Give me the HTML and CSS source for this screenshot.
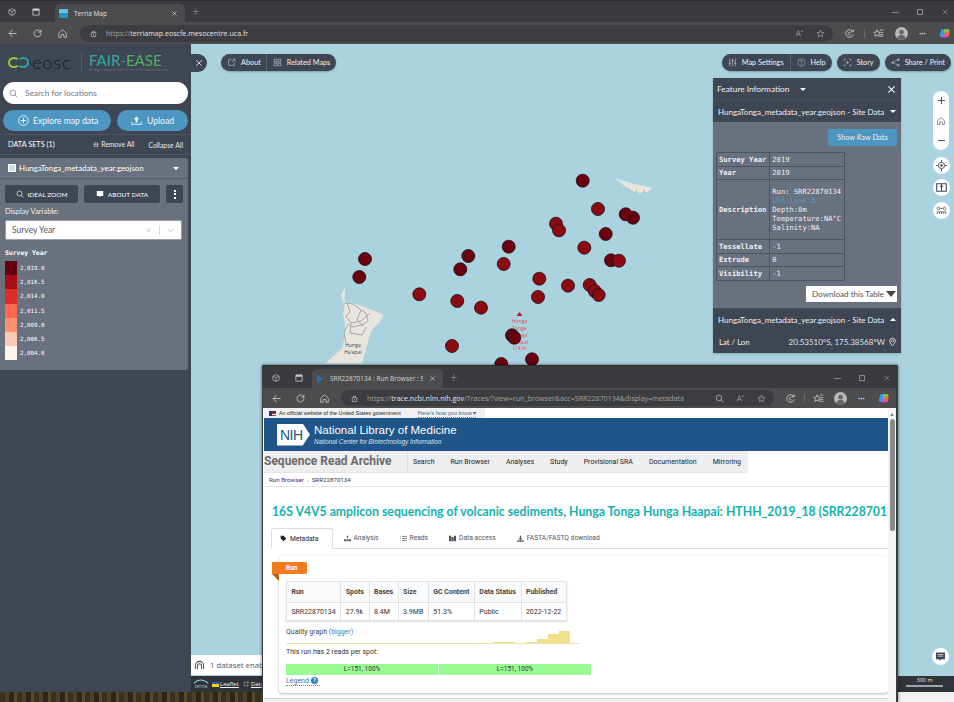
FILE: index.html
```html
<!DOCTYPE html>
<html lang="en">
<head>
<meta charset="utf-8">
<title>Terria Map</title>
<link rel="stylesheet" href="styles.css">
</head>
<body>
<svg class="sprite" aria-hidden="true">
  <symbol id="i-back" viewBox="0 0 16 16"><path d="M14 8H3M8 3 3 8l5 5" fill="none" stroke="currentColor" stroke-width="1.2"/></symbol>
  <symbol id="i-reload" viewBox="0 0 16 16"><path d="M13 8a5 5 0 1 1-1.6-3.7L13 6V2.5M13 6H9.5" fill="none" stroke="currentColor" stroke-width="1.2"/></symbol>
  <symbol id="i-home" viewBox="0 0 16 16"><path d="M2.5 7.5 8 2.5l5.500 5v6H10V9.500H6v4H2.500z" fill="none" stroke="currentColor" stroke-width="1.100"/></symbol>
  <symbol id="i-lock" viewBox="0 0 16 16"><path d="M4 6.500h8v7H4zM6 6.500V4h4v2.500" fill="none" stroke="currentColor" stroke-width="1.200"/><circle cx="8" cy="10" r="1" fill="currentColor"/></symbol>
  <symbol id="i-tabs" viewBox="0 0 16 16"><path d="M3 5l5-2.500 5 2.500v6l-5 2.500-5-2.500z M8 7.500v6M3 5l5 2.500 5-2.500" fill="none" stroke="currentColor" stroke-width="1"/></symbol>
  <symbol id="i-win" viewBox="0 0 16 16"><path d="M3 3h10v10H3z" fill="none" stroke="currentColor" stroke-width="1.300"/><path d="M3 3h10v3H3z" fill="currentColor"/></symbol>
  <symbol id="i-close" viewBox="0 0 16 16"><path d="M3.500 3.500l9 9m0-9l-9 9" fill="none" stroke="currentColor" stroke-width="1.500"/></symbol>
  <symbol id="i-star" viewBox="0 0 16 16"><path d="M8 2.200l1.800 3.900 4.200.5-3.100 2.900.8 4.200L8 11.600l-3.700 2.100.8-4.200L2 6.600l4.200-.5z" fill="none" stroke="currentColor" stroke-width="1"/></symbol>
  <symbol id="i-read" viewBox="0 0 16 16"><path d="M2 13 6 3l4 10M3.500 10h5M11 5l1.500-2L14 5" fill="none" stroke="currentColor" stroke-width="1"/></symbol>
  <symbol id="i-ext" viewBox="0 0 16 16"><path d="M8 3H3v10h10V8M9 7l5-5M10 2h4v4" fill="none" stroke="currentColor" stroke-width="1.200"/></symbol>
  <symbol id="i-grid" viewBox="0 0 16 16"><path d="M2 2h5v5H2zM9 2h5v5H9zM2 9h5v5H2zM9 9h5v5H9z" fill="none" stroke="currentColor" stroke-width="1.200"/></symbol>
  <symbol id="i-sliders" viewBox="0 0 16 16"><path d="M3 1v14M8 1v14M13 1v14" stroke="currentColor" stroke-width="1.200"/><path d="M1.500 9h3v2h-3zM6.500 4h3v2h-3zM11.500 8h3v2h-3z" fill="currentColor"/></symbol>
  <symbol id="i-help" viewBox="0 0 16 16"><circle cx="8" cy="8" r="6.500" fill="none" stroke="currentColor"/><path d="M6 6.500a2 2 0 1 1 3 1.700c-.7.4-1 .8-1 1.500" fill="none" stroke="currentColor"/><circle cx="8" cy="11.800" r=".7" fill="currentColor"/></symbol>
  <symbol id="i-story" viewBox="0 0 16 16"><path d="M2 5V2h3M11 2h3v3M14 11v3h-3M5 14H2v-3M8 5v6M5 8h6" fill="none" stroke="currentColor" stroke-width="1.200"/></symbol>
  <symbol id="i-share" viewBox="0 0 16 16"><circle cx="3" cy="8" r="2" fill="currentColor"/><circle cx="13" cy="3" r="2" fill="currentColor"/><circle cx="13" cy="13" r="2" fill="currentColor"/><path d="M3 8l10-5M3 8l10 5" stroke="currentColor"/></symbol>
  <symbol id="i-search" viewBox="0 0 16 16"><circle cx="7" cy="7" r="5" fill="none" stroke="currentColor" stroke-width="1.300"/><path d="M10.500 10.500 15 15" stroke="currentColor" stroke-width="1.300"/></symbol>
  <symbol id="i-plus-c" viewBox="0 0 16 16"><circle cx="8" cy="8" r="7" fill="none" stroke="currentColor" stroke-width="1.300"/><path d="M8 4v8M4 8h8" stroke="currentColor" stroke-width="1.500"/></symbol>
  <symbol id="i-upload" viewBox="0 0 16 16"><path d="M1 10v3.500h14V10" fill="none" stroke="currentColor" stroke-width="1.300"/><path d="M8 2l4 4H9.500v5h-3V6H4z" fill="currentColor"/></symbol>
  <symbol id="i-chat" viewBox="0 0 16 16"><path d="M1.500 2h13v10H9l-2.500 2.500V12h-5z" fill="currentColor"/><path d="M4 5h8M4 7.500h8" stroke="#fff" stroke-width="1"/></symbol>
  <symbol id="i-target" viewBox="0 0 16 16"><circle cx="8" cy="8" r="4.500" fill="none" stroke="currentColor" stroke-width="1.300"/><circle cx="8" cy="8" r="1.800" fill="currentColor"/><path d="M8 0v3M8 13v3M0 8h3M13 8h3" stroke="currentColor" stroke-width="1.300"/></symbol>
  <symbol id="i-split" viewBox="0 0 16 16"><path d="M1 2.500h14v11H1z" fill="none" stroke="currentColor" stroke-width="1.500"/><path d="M8 3v10" stroke="currentColor" stroke-width="1.500"/><path d="M8 4l3 3H5z" fill="currentColor"/></symbol>
  <symbol id="i-network" viewBox="0 0 16 16"><circle cx="3.500" cy="5" r="2" fill="none" stroke="currentColor"/><circle cx="12.500" cy="5" r="2" fill="none" stroke="currentColor"/><path d="M5.500 5h5M1 10h14M2 13v-3M5 13v-3M8 13v-3M11 13v-3M14 13v-3" stroke="currentColor"/></symbol>
  <symbol id="i-pin" viewBox="0 0 16 16"><path d="M8 15C4.500 10.500 3 8.500 3 6a5 5 0 0 1 10 0c0 2.500-1.500 4.500-5 9z" fill="none" stroke="currentColor" stroke-width="1.300"/><circle cx="8" cy="6" r="2" fill="none" stroke="currentColor"/></symbol>
  <symbol id="i-ear" viewBox="0 0 16 16"><path d="M2 13v-5a6 6 0 0 1 12 0v5M5 13V8.500a3 3 0 0 1 6 0V13" fill="none" stroke="currentColor" stroke-width="1.500"/></symbol>
  <symbol id="i-sync" viewBox="0 0 16 16"><path d="M13 5.500A5.500 5.500 0 1 0 13.500 9M9.500 6.500a2 2 0 1 0 0 3M13.500 2v3.500H10" fill="none" stroke="currentColor" stroke-width="1.200"/></symbol>
  <symbol id="i-favs" viewBox="0 0 16 16"><path d="M6 2.500 7.400 6l3.600.3-2.700 2.300.8 3.600L6 10.300l-3.100 1.900.8-3.600L1 6.300 4.600 6zM10 3h5M12 6.500h3M10 12h5M10 9.500h5" fill="none" stroke="currentColor" stroke-width="1.100"/></symbol>
  <symbol id="i-copilot" viewBox="0 0 16 16"><path d="M3 3h6L6 13H2.500A1.500 1.500 0 0 1 1 11z" fill="#2a9df4"/><path d="M7 3h5a2 2 0 0 1 2 2l-2 6H7z" fill="#7fd13b"/><path d="M9 6h5.500L13 13H6z" fill="#f1683b"/><path d="M5 10h7l-2 4H4z" fill="#d94fc4"/></symbol>
  <symbol id="i-avatar" viewBox="0 0 16 16"><circle cx="8" cy="8" r="8" fill="#b9b9b9"/><circle cx="8" cy="6.300" r="3" fill="#666"/><path d="M2.800 13.500c1-3 2.800-4 5.200-4s4.200 1 5.200 4A8 8 0 0 1 8 16a8 8 0 0 1-5.200-2.500z" fill="#666"/></symbol>
</svg>

<div class="desktop">
  <div class="window-main">
    <div class="tabstrip">
      <svg class="chrome-icon tab-first"><use href="#i-tabs"/></svg>
      <svg class="chrome-icon"><use href="#i-win"/></svg>
      <div class="tab">
        <span class="favicon"></span>
        <span class="tab-title">Terria Map</span>
        <svg class="tab-close"><use href="#i-close"/></svg>
      </div>
      <span class="new-tab">+</span>
      <div class="win-controls">
        <span class="wc-min"></span><span class="wc-max"></span><svg class="wc-close"><use href="#i-close"/></svg>
      </div>
    </div>
    <div class="toolbar">
      <svg class="nav-icon"><use href="#i-back"/></svg>
      <svg class="nav-icon"><use href="#i-reload"/></svg>
      <svg class="nav-icon"><use href="#i-home"/></svg>
      <div class="address">
        <svg class="addr-icon"><use href="#i-lock"/></svg>
        <span class="url"><span class="dim">https://</span>terriamap.eoscfe.mesocentre.uca.fr</span>
        <svg class="addr-icon push"><use href="#i-read"/></svg>
        <svg class="addr-icon addr-star"><use href="#i-star"/></svg>
      </div>
      <svg class="nav-icon"><use href="#i-sync"/></svg>
      <span class="sep"></span>
      <svg class="nav-icon"><use href="#i-favs"/></svg>
      <svg class="avatar"><use href="#i-avatar"/></svg>
      <span class="dots">···</span>
      <svg class="copilot"><use href="#i-copilot"/></svg>
    </div>

    <div class="app">
      <aside class="sidebar">
        <div class="brand">
          <span class="eosc"><span class="eosc-mark"><i class="ring-a"></i><i class="ring-b"></i></span>eosc</span>
          <span class="brand-rule"></span>
          <span class="fair"><span class="fair-name"><b class="teal">FAIR</b><b class="mint">-</b><b class="green">EASE</b></span><small>Building an Innovative Earth Science &amp; Environmental Services</small></span>
        </div>
        <div class="search"><svg class="search-icon"><use href="#i-search"/></svg><span>Search for locations</span></div>
        <div class="actions">
          <div class="act act-wide"><svg><use href="#i-plus-c"/></svg>Explore map data</div>
          <div class="act act-narrow"><svg><use href="#i-upload"/></svg>Upload</div>
        </div>
        <div class="sets">
          <span class="sets-title">DATA SETS (1)</span>
          <span class="sets-link sets-remove">⊖ Remove All</span>
          <span class="sets-link">Collapse All</span>
        </div>
        <div class="card">
          <div class="card-head"><span class="check"></span><span class="card-name">HungaTonga_metadata_year.geojson</span><span class="caret"></span></div>
          <div class="card-btns">
            <div class="cbtn cbtn-a"><svg><use href="#i-search"/></svg>IDEAL ZOOM</div>
            <div class="cbtn cbtn-b"><svg><use href="#i-chat"/></svg>ABOUT DATA</div>
            <div class="cbtn cbtn-c"><i></i><i></i><i></i></div>
          </div>
          <div class="var-label">Display Variable:</div>
          <div class="select"><span class="select-text">Survey Year</span><svg class="select-x"><use href="#i-close"/></svg><span class="select-sep"></span><svg class="select-arrow" viewBox="0 0 10 6"><path d="M1 1l4 4 4-4" fill="none" stroke="currentColor"/></svg></div>
          <div class="legend-title">Survey Year</div>
          <div class="legend">
            <div class="lg-row"><span class="sw sw1"></span>2,019.0</div>
            <div class="lg-row"><span class="sw sw2"></span>2,016.5</div>
            <div class="lg-row"><span class="sw sw3"></span>2,014.0</div>
            <div class="lg-row"><span class="sw sw4"></span>2,011.5</div>
            <div class="lg-row"><span class="sw sw5"></span>2,009.0</div>
            <div class="lg-row"><span class="sw sw6"></span>2,006.5</div>
            <div class="lg-row"><span class="sw sw7"></span>2,004.0</div>
          </div>
        </div>
      </aside>

      <main class="map">
        <svg class="map-canvas" viewBox="191 44 763 648" aria-hidden="true">
          <path class="land" d="M345 287.300l-4 7.700 2.300 6.700 10 1.600 15 5 15 6.700-3.300 6.700-8.300 8.300-5 16.700-5 16.700h-36.700l16.700-14.700 3.300-11.600v-13.400l-2-10.300 1.500-6z"/>
          <path class="land" d="M615 178l15 5 10 2 12 3-4 4-11 1-10-5z"/>
          <path class="road" d="M347 303l3 8-4 6 5 6 10-2 9-8M353 304l8 6 5 3 2 8-6 4-9 2-5-3-4 9 2 10M361 310l-4 10 6 6M351 323l-1 10 12 2 4-8M345 303l8 1"/>
          <path class="road" d="M628 188l2 3M636 190l1 3M644 190l0 3"/>
          <text class="islabel" x="353" y="347">Hunga</text>
          <text class="islabel" x="353" y="354">Ha'apai</text>
          <path class="peak" d="M519.500 312l3 4h-6z"/>
          <text class="volcano" x="519.500" y="323">Hunga</text>
          <text class="volcano" x="519.500" y="330">Tonga</text>
          <text class="volcano" x="519.500" y="337">Hunga</text>
          <text class="volcano" x="519.500" y="344">Ha'apai</text>
          <text class="volcano" x="519.500" y="350">114 m</text>
          <g class="dot-old">
            <circle cx="582.700" cy="180.700" r="6.500"/><circle cx="633" cy="217.700" r="6.500"/><circle cx="625.700" cy="214.300" r="6.500"/>
            <circle cx="605.700" cy="234" r="6.500"/><circle cx="508.700" cy="246.700" r="6.500"/><circle cx="611" cy="260.300" r="6.500"/>
            <circle cx="468.300" cy="256" r="6.500"/><circle cx="365" cy="259" r="6.500"/><circle cx="359.300" cy="277" r="6.500"/>
            <circle cx="460.300" cy="269.300" r="6.500"/>
          </g>
          <g class="dot-new">
            <circle cx="598" cy="209" r="6.500"/><circle cx="556" cy="223.700" r="6.500"/><circle cx="559" cy="230.300" r="6.500"/>
            <circle cx="584.300" cy="247.700" r="6.500"/><circle cx="619" cy="260.700" r="6.500"/><circle cx="503.700" cy="264" r="6.500"/>
            <circle cx="539.300" cy="278.700" r="6.500"/><circle cx="568" cy="285.700" r="6.500"/><circle cx="589.700" cy="285" r="6.500"/>
            <circle cx="594.700" cy="291" r="6.500"/><circle cx="598.700" cy="295" r="6.500"/><circle cx="538" cy="297" r="6.500"/>
            <circle cx="419.300" cy="294.300" r="6.500"/><circle cx="457.300" cy="301" r="6.500"/><circle cx="481" cy="307.700" r="6.500"/>
            <circle cx="452" cy="346" r="6.500"/>
          </g>
          <g class="dot-old">
            <circle cx="512" cy="335.300" r="6.500"/><circle cx="514.300" cy="337.700" r="6.500"/><circle cx="532" cy="359.300" r="6.500"/><circle cx="501.300" cy="364" r="6.500"/>
          </g>
        </svg>

        <button class="panel-close"><svg><use href="#i-close"/></svg></button>

        <div class="topbar-left">
          <div class="pill">
            <span class="pill-item pill-about"><svg><use href="#i-ext"/></svg>About</span>
            <span class="pill-item pill-related"><svg><use href="#i-grid"/></svg>Related Maps</span>
          </div>
        </div>
        <div class="topbar-right">
          <div class="pill">
            <span class="pill-item pill-settings"><svg><use href="#i-sliders"/></svg>Map Settings</span>
            <span class="pill-item pill-help"><svg><use href="#i-help"/></svg>Help</span>
          </div>
          <div class="pill"><span class="pill-item pill-story"><svg><use href="#i-story"/></svg>Story</span></div>
          <div class="pill"><span class="pill-item pill-share"><svg><use href="#i-share"/></svg>Share / Print</span></div>
        </div>

        <section class="feature">
          <header class="f-head"><span>Feature Information</span><span class="caret f-caret"></span><svg class="f-close"><use href="#i-close"/></svg></header>
          <div class="f-sub"><span>HungaTonga_metadata_year.geojson - Site Data</span><span class="caret"></span></div>
          <div class="f-body">
            <div class="raw-row"><span class="raw">Show Raw Data</span></div>
            <table class="f-table">
              <tr><th>Survey Year</th><td>2019</td></tr>
              <tr><th>Year</th><td>2019</td></tr>
              <tr><th>Description</th><td class="f-desc">Run: SRR22870134<br><span class="f-link">SRA link ⧉</span><br>Depth:0m<br>Temperature:NA°C<br>Salinity:NA</td></tr>
              <tr><th>Tessellate</th><td>-1</td></tr>
              <tr><th>Extrude</th><td>0</td></tr>
              <tr><th>Visibility</th><td>-1</td></tr>
            </table>
            <div class="dl-row"><span class="dl"><span>Download this Table</span><i class="dl-arrow"></i></span></div>
          </div>
          <div class="f-foot"><span>HungaTonga_metadata_year.geojson - Site Data</span><span class="caret caret-up"></span></div>
          <div class="f-loc"><span>Lat / Lon</span><span class="f-coords">20.53510°S, 175.38568°W<svg><use href="#i-pin"/></svg></span></div>
        </section>

        <div class="map-ctrl">
          <div class="zoom-pill">
            <svg viewBox="0 0 10 10"><path d="M1 5h8M5 1v8" stroke="currentColor" stroke-width="1.200"/></svg>
            <svg class="zoom-home"><use href="#i-home"/></svg>
            <svg viewBox="0 0 10 10"><path d="M1 5h8" stroke="currentColor" stroke-width="1.200"/></svg>
          </div>
          <span class="round"><svg><use href="#i-target"/></svg></span>
          <span class="round"><svg><use href="#i-split"/></svg></span>
          <span class="round"><svg><use href="#i-network"/></svg></span>
        </div>
        <span class="round feedback"><svg><use href="#i-chat"/></svg></span>

        <div class="notice"><svg><use href="#i-ear"/></svg><span>1 dataset enabled</span></div>
        <footer class="map-foot">
          <span class="terria"><svg viewBox="0 0 20 6"><path d="M1 5c5-5 12-5 18 0" fill="none" stroke="currentColor" stroke-width="1.500"/></svg>terria</span>
          <span class="flag"><i></i><i></i></span>
          <span class="foot-link">Leaflet</span>
          <svg class="foot-ext"><use href="#i-ext"/></svg>
          <span class="foot-link">Data</span>
          <span class="scale"><span>300 m</span><i></i></span>
        </footer>
      </main>
    </div>
  </div>
  <div class="wallpaper"></div>

  <div class="window-float">
    <div class="tabstrip tabstrip-b">
      <svg class="chrome-icon tab-first"><use href="#i-tabs"/></svg>
      <svg class="chrome-icon"><use href="#i-win"/></svg>
      <div class="tab tab-b">
        <svg class="ncbi-fav" viewBox="0 0 10 10"><path d="M1 1h3l4 4-4 4H1z" fill="#2c6ea8"/></svg>
        <span class="tab-title">SRR22870134 : Run Browser : SRA</span>
        <svg class="tab-close"><use href="#i-close"/></svg>
      </div>
      <span class="new-tab">+</span>
      <div class="win-controls">
        <span class="wc-min"></span><span class="wc-max"></span><svg class="wc-close"><use href="#i-close"/></svg>
      </div>
    </div>
    <div class="toolbar toolbar-b">
      <svg class="nav-icon"><use href="#i-back"/></svg>
      <svg class="nav-icon"><use href="#i-reload"/></svg>
      <svg class="nav-icon"><use href="#i-home"/></svg>
      <div class="address">
        <svg class="addr-icon"><use href="#i-lock"/></svg>
        <span class="url"><span class="dim">https://</span>trace.ncbi.nlm.nih.gov<span class="dim">/Traces/?view=run_browser&amp;acc=SRR22870134&amp;display=metadata</span></span>
        <svg class="addr-icon push"><use href="#i-search"/></svg>
        <svg class="addr-icon addr-gap"><use href="#i-read"/></svg>
        <svg class="addr-icon addr-star"><use href="#i-star"/></svg>
      </div>
      <svg class="nav-icon"><use href="#i-sync"/></svg>
      <span class="sep"></span>
      <svg class="nav-icon"><use href="#i-favs"/></svg>
      <svg class="avatar"><use href="#i-avatar"/></svg>
      <span class="dots">···</span>
      <svg class="copilot"><use href="#i-copilot"/></svg>
    </div>
    <div class="page">
      <div class="page-main">
        <div class="gov"><span class="gov-inner"><span class="us-flag"></span>An official website of the United States government<span class="gov-how">Here's how you know ▾</span></span></div>
        <div class="nih">
          <span class="nih-logo">NIH</span>
          <div class="nih-text"><div class="nih-name">National Library of Medicine</div><div class="nih-sub">National Center for Biotechnology Information</div></div>
        </div>
        <nav class="sra-nav">
          <span class="sra-name">Sequence Read Archive</span>
          <span class="sra-links"><a>Search</a><a>Run Browser</a><a>Analyses</a><a>Study</a><a>Provisional SRA</a><a>Documentation</a><a>Mirroring</a></span>
        </nav>
        <div class="crumbs"><a>Run Browser</a><span class="crumb-sep">›</span><span>SRR22870134</span></div>
        <h1 class="sra-title">16S V4V5 amplicon sequencing of volcanic sediments, Hunga Tonga Hunga Haapai: HTHH_2019_18 (SRR22870134)</h1>
        <div class="sra-tabs">
          <span class="stab stab-on"><svg viewBox="0 0 10 10"><path d="M1 1h4l4 4-4 4-4-4z" fill="currentColor"/></svg>Metadata</span>
          <span class="stab"><svg viewBox="0 0 10 10"><path d="M4 1h2v3H4zM0 6h3v3H0zM3.500 6h3v3h-3zM7 6h3v3H7z" fill="currentColor"/></svg>Analysis</span>
          <span class="stab"><svg viewBox="0 0 10 10"><path d="M3 2h7M3 5h7M3 8h7M0 2h1M0 5h1M0 8h1" stroke="currentColor"/></svg>Reads</span>
          <span class="stab"><svg viewBox="0 0 10 10"><path d="M0 1h3v8H0zM3.500 3h3v6h-3zM7 1h3v8H7z" fill="currentColor"/></svg>Data access</span>
          <span class="stab"><svg viewBox="0 0 10 10"><path d="M4 1h2v4h2L5 8 2 5h2zM0 8h10v1.500H0z" fill="currentColor"/></svg>FASTA/FASTQ download</span>
        </div>
        <div class="sra-panel">
          <div class="ribbon">Run</div>
          <table class="run-table">
            <tr><th>Run</th><th>Spots</th><th>Bases</th><th>Size</th><th>GC Content</th><th>Data Status</th><th>Published</th></tr>
            <tr><td>SRR22870134</td><td>27.9k</td><td>8.4M</td><td>3.9MB</td><td>51.3%</td><td>Public</td><td>2022-12-22</td></tr>
          </table>
          <div class="quality">
            <span>Quality graph <a>(bigger)</a></span>
            <span class="q-bars"><i class="q1"></i><i class="q2"></i><i class="q3"></i><i class="q4"></i><i class="q5"></i></span>
          </div>
          <div class="reads-note">This run has 2 reads per spot:</div>
          <div class="reads"><span>L=151, 100%</span><span>L=151, 100%</span></div>
          <div class="legend-link"><a>Legend</a><b>?</b></div>
        </div>
        <div class="hscroll"></div>
      </div>
      <div class="vscroll"><i class="v-arrow"></i><i class="v-thumb"></i></div>
    </div>
  </div>
</div>
</body>
</html>
```
FILE: styles.css
```css
* { box-sizing: border-box; }
html, body { margin: 0; padding: 0; height: 100%; overflow: hidden; }
body { font-family: "Lato", "Noto Sans", sans-serif; background: #aad3df; }
.sprite { position: absolute; width: 0; height: 0; }
svg { display: block; }

.desktop { position: relative; width: 954px; height: 702px; overflow: hidden; display: flex; flex-direction: column; }
.window-main { height: 692px; display: flex; flex-direction: column; flex: none; }
.wallpaper { flex: 1; background: linear-gradient(90deg, transparent 262px, #f2f2f2 262px), repeating-linear-gradient(90deg, #3a3020 0 5px, #4e4026 5px 9px, #2e2719 9px 14px, #5a4a2c 14px 17px); }

/* browser chrome */
.tabstrip { height: 22px; flex: none; display: flex; align-items: flex-end; background: #3a3b3e; border-top: 1px solid #2b2b2e; color: #d8d8d8; padding-left: 7px; }
.chrome-icon { width: 10px; height: 10px; margin: 0 6px 5px 0; color: #c8c8c8; flex: none; }
.tab-first { margin-right: 14px; }
.tab { width: 130px; height: 18px; margin-left: 8px; background: #4b4c4e; border-radius: 5px 5px 0 0; display: flex; align-items: center; padding: 0 7px 0 4px; gap: 6px; flex: none; }
.favicon { width: 9px; height: 9px; background: linear-gradient(180deg, #5ec5e8 45%, #2d8fbf 45%); border-radius: 1px; flex: none; }
.tab-title { font: 6.500px "Open Sans", sans-serif; color: #e0e0e0; white-space: nowrap; overflow: hidden; flex: 1; }
.tab-close { width: 7px; height: 7px; color: #ddd; flex: none; }
.new-tab { font: 300 13px "Open Sans", sans-serif; color: #9a9a9a; margin: 0 0 2px 7px; line-height: 18px; }
.win-controls { margin-left: auto; display: flex; align-items: center; gap: 18px; padding: 0 5px 6px 0; }
.wc-min { width: 7px; height: 1px; background: #888; }
.wc-max { width: 6px; height: 6px; border: 1px solid #888; }
.wc-close { width: 8px; height: 8px; color: #888; }

.toolbar { height: 22px; flex: none; display: flex; align-items: center; background: #4b4c4e; padding-left: 7px; color: #cfcfcf; }
.nav-icon { width: 11px; height: 11px; margin-right: 14px; flex: none; color: #d0d0d0; }
.address { width: 753px; margin-left: -2px; margin-right: 11px; height: 17px; border-radius: 9px; background: #3c3d40; display: flex; align-items: center; padding: 0 8px 0 9px; flex: none; }
.addr-icon { width: 9px; height: 9px; color: #c0c0c0; flex: none; }
.addr-icon.push { margin-left: auto; }
.addr-gap { margin-left: 12px; }
.addr-star { margin-left: 12px; }
.url { font: 7.100px "Open Sans", sans-serif; color: #e4e4e4; margin-left: 8px; white-space: nowrap; }
.dim { color: #a2a2a2; }
.sep { width: 1px; height: 9px; background: #6a6a6c; margin: 0 8px 0 -5px; flex: none; }
.avatar { width: 13px; height: 13px; margin: 0 11px 0 -3px; flex: none; }
.dots { font: bold 8px "Open Sans", sans-serif; color: #ddd; width: 12px; margin-right: 8px; flex: none; white-space: nowrap; }
.copilot { width: 12px; height: 12px; flex: none; }

/* app */
.app { flex: 1; display: flex; min-height: 0; }
.sidebar { width: 191px; flex: none; background: #3e4553; color: #fff; display: flex; flex-direction: column; }

.brand { height: 34px; padding: 2px 0 0 8px; display: flex; align-items: center; flex: none; }
.eosc { display: flex; align-items: center; font: 300 18.500px/18px "Lato", sans-serif; color: #16181c; letter-spacing: .7px; width: 73px; }
.eosc-mark { position: relative; width: 21px; height: 11px; margin-right: 3px; flex: none; }
.eosc-mark i { position: absolute; top: 0; width: 12px; height: 11px; border: 2px solid #9acb2e; border-radius: 50%; }
.ring-a { left: 0; border-right-color: transparent !important; }
.ring-b { left: 9px; border-color: #2aa7a0 !important; border-left-color: transparent !important; }
.brand-rule { width: 1px; height: 20px; background: #4f5665; margin-right: 7px; flex: none; }
.fair { display: flex; flex-direction: column; }
.fair-name { font: 400 15px/15px "Lato", sans-serif; white-space: nowrap; }
.fair-name b { font-weight: 400; }
.teal { color: #2fa9a5; }
.mint { color: #4e8f8e; }
.green { color: #52ae60; }
.fair small { font: 2.900px/4px "Lato", sans-serif; color: #6e7584; white-space: nowrap; }

.search { height: 22px; margin: 4px 3px 0; border-radius: 11px; background: #fff; display: flex; align-items: center; color: #6d7480; font: 400 8.300px "Lato", sans-serif; padding-left: 6px; flex: none; }
.search-icon { width: 9px; height: 9px; margin-right: 7px; color: #777; }
.actions { display: flex; gap: 6px; margin: 6px 3px 0; flex: none; }
.act { height: 21px; border-radius: 11px; background: #4d96c2; display: flex; align-items: center; font: 400 8.600px "Lato", sans-serif; color: #f2f7fa; }
.act svg { width: 11px; height: 11px; margin-right: 5px; }
.act-wide { width: 108px; padding-left: 15px; }
.act-wide svg { margin-right: 4px; }
.act-narrow { width: 71px; padding-left: 14px; }
.sets { height: 21px; margin-top: 3px; border-top: 1px solid #4e5564; border-bottom: 1px solid #4e5564; display: flex; align-items: center; padding: 0 8px; font: 400 6.800px "Lato", sans-serif; flex: none; }
.sets-title { font-size: 7.300px; margin-right: auto; }
.sets-remove { margin-right: 14px; }
.sets-link { color: #e8eaee; }

.card { margin-top: 3px; width: 188px; height: 212px; background: #69717f; border-radius: 0 3px 3px 0; flex: none; }
.card-head { height: 21px; display: flex; align-items: center; padding: 0 9px 0 8px; border-bottom: 1px solid #555c6a; }
.check { width: 8px; height: 8px; border: 1px solid #fff; background: #d8dbe0; margin-right: 3px; flex: none; }
.card-name { font: 400 7.850px "Lato", sans-serif; flex: 1; white-space: nowrap; }
.caret { width: 0; height: 0; border: 3px solid transparent; border-top: 3px solid #fff; border-bottom: 0; flex: none; }
.caret-up { border-top: 0; border-bottom: 3px solid #fff; }
.card-btns { display: flex; gap: 6px; margin: 6px 5px 0; }
.cbtn { height: 18px; border-radius: 2px; background: #3e4553; display: flex; align-items: center; justify-content: center; font: 400 6.500px "Lato", sans-serif; }
.cbtn svg { width: 8px; height: 8px; margin-right: 4px; }
.cbtn-a { width: 73px; }
.cbtn-b { width: 76px; }
.cbtn-c { width: 17px; flex-direction: column; gap: 1.500px; }
.cbtn-c i { width: 2px; height: 2px; background: #fff; }
.var-label { font: 400 7.500px/10px "Lato", sans-serif; margin: 4px 5px 3px; color: #eceef1; }
.select { height: 20px; margin: 0 5px; width: 177px; border-radius: 2px; background: #fff; border: 1px solid #9aa0aa; display: flex; align-items: center; padding-left: 6px; color: #555; font: 400 8.500px "Lato", sans-serif; }
.select-text { flex: 1; }
.select-x { width: 7px; height: 7px; color: #aaa; }
.select-sep { width: 1px; height: 10px; background: #d5d5d5; margin: 0 7px 0 7px; }
.select-arrow { width: 7px; height: 5px; color: #aaa; margin-right: 7px; }
.legend-title { font: bold 6.400px/8px "DejaVu Sans Mono", monospace; margin: 9px 5px 4px; }
.legend { margin-left: 5px; }
.lg-row { display: flex; align-items: center; height: 14.200px; font: 5.800px "DejaVu Sans Mono", monospace; gap: 3px; }
.sw { width: 12px; height: 14.200px; flex: none; }
.sw1 { background: #67000d; }
.sw2 { background: #a50f15; }
.sw3 { background: #de2d26; }
.sw4 { background: #fb6a4a; }
.sw5 { background: #fc9272; }
.sw6 { background: #fcc9b7; }
.sw7 { background: #fff5f0; }

/* map */
.map { flex: 1; position: relative; background: #aad3df; overflow: hidden; }
.map-canvas { position: absolute; inset: 0; width: 100%; height: 100%; }
.land { fill: #e8e4de; }
.road { fill: none; stroke: #a6a7a5; stroke-width: 1; }
.islabel { font: 5px "Open Sans", sans-serif; fill: #444; text-anchor: middle; }
.peak { fill: #c6101c; }
.volcano { font: 5px "Open Sans", sans-serif; fill: #e0504e; text-anchor: middle; }
.dot-old circle { fill: #6b0010; stroke: #1d1012; stroke-width: .8; }
.dot-new circle { fill: #8c0a12; stroke: #1d1012; stroke-width: .8; }

.panel-close { position: absolute; left: 0; top: 10px; width: 16px; height: 18px; padding: 0; border: 0; border-radius: 0 9px 9px 0; background: #3e4553; color: #d8dbe0; display: flex; align-items: center; justify-content: center; }
.panel-close svg { width: 10px; height: 10px; }
.pill { height: 17px; border-radius: 9px; background: #3e4553; color: #f0f2f5; display: flex; align-items: center; font: 400 7.300px "Lato", sans-serif; box-shadow: 0 1px 2px rgba(0,0,0,.25); flex: none; }
.pill-item { display: flex; align-items: center; height: 100%; white-space: nowrap; }
.pill-item svg { width: 9px; height: 9px; margin-right: 5px; color: #b8bdc6; flex: none; }
.topbar-left { position: absolute; left: 30px; top: 10px; }
.topbar-right { position: absolute; right: 3px; top: 10px; display: flex; gap: 5px; }
.pill-about { padding: 0 5px 0 6px; border-right: 1px solid #5a6170; }
.pill-related { padding: 0 6px; }
.pill-settings { padding: 0 6px; border-right: 1px solid #5a6170; }
.pill-help { padding: 0 6px; }
.pill-story { padding: 0 6px; }
.pill-share { padding: 0 6px 0 6px; }

.feature { position: absolute; left: 522px; top: 34px; width: 188px; color: #eef0f3; display: flex; flex-direction: column; box-shadow: 0 1px 2px rgba(0,0,0,.2); }
.f-head { height: 22px; background: #3e4553; display: flex; align-items: center; padding: 0 4px; font: 400 8.300px "Lato", sans-serif; gap: 11px; }
.f-caret { margin-top: 1px; }
.f-close { width: 11px; height: 11px; margin-left: auto; color: #fff; }
.f-sub, .f-foot { height: 22px; background: #3e4553; border-top: 1px solid #474e5c; display: flex; align-items: center; justify-content: space-between; padding: 0 5px 0 5px; font: 400 8px "Lato", sans-serif; white-space: nowrap; }
.f-body { height: 186px; background: #69717f; padding: 7px 4px 0 2.500px; display: flex; flex-direction: column; }
.raw-row, .dl-row { display: flex; justify-content: flex-end; }
.raw { width: 69px; height: 17px; background: #4d96c2; border-radius: 2px; font: 400 7.300px/17px "Lato", sans-serif; text-align: center; }
.f-table { border-collapse: collapse; margin-top: 6px; font: 7.150px/9.200px "DejaVu Sans Mono", monospace; width: 129px; height: 129px; }
.f-table th, .f-table td { border: 1px solid #4c5361; padding: 1px 2.500px; text-align: left; white-space: nowrap; }
.f-table th { width: 53px; font-weight: bold; }
.f-link { color: #4d96c2; }
.f-desc { padding-top: 3px !important; padding-bottom: 3px !important; }
.dl-row { margin-top: 5px; }
.dl { position: relative; width: 91px; height: 16px; background: #fff; color: #555; font: 400 8.100px/16px "Lato", sans-serif; padding-left: 6px; white-space: nowrap; overflow: hidden; }
.dl-arrow { position: absolute; right: 1px; top: 5px; width: 0; height: 0; border: 5px solid transparent; border-top: 6px solid #444; border-bottom: 0; }
.f-loc { height: 23px; background: #3e4553; display: flex; align-items: center; justify-content: space-between; padding: 0 4px 0 6px; font: 400 7.800px "Lato", sans-serif; }
.f-coords { display: flex; align-items: center; gap: 3px; color: #dfe2e7; font-size: 8px; }
.f-coords svg { width: 9px; height: 10px; color: #fff; }

.map-ctrl { position: absolute; left: 742px; top: 47px; width: 16px; display: flex; flex-direction: column; align-items: center; gap: 5.500px; }
.zoom-pill { width: 16px; height: 59px; background: #fff; border-radius: 8px; color: #4f5665; display: flex; flex-direction: column; align-items: center; justify-content: space-between; padding: 5px 0; margin-bottom: 1px; }
.zoom-pill svg { width: 9px; height: 9px; }
.zoom-pill .zoom-home { width: 10px; height: 10px; }
.round { width: 17px; height: 17px; border-radius: 50%; background: #fff; color: #3e4553; display: flex; align-items: center; justify-content: center; flex: none; }
.round svg { width: 11px; height: 11px; }
.feedback { position: absolute; left: 741px; top: 604px; }
.notice { position: absolute; left: 0; top: 611px; width: 200px; height: 20px; background: #fff; display: flex; align-items: center; padding-left: 3px; font: 7.800px "Open Sans", sans-serif; color: #555; white-space: nowrap; overflow: hidden; }
.notice svg { width: 11px; height: 11px; color: #555; margin-right: 5px; flex: none; }
.map-foot { position: absolute; left: 0; right: 0; bottom: 0; height: 16px; background: #2e343a; color: #d8d8d8; display: flex; align-items: center; padding-left: 2px; font: 6px "Open Sans", sans-serif; }
.terria { display: flex; flex-direction: column; align-items: center; color: #8ec7da; font-size: 5px; line-height: 5px; margin-right: 3px; width: 16px; }
.terria svg { width: 16px; height: 5px; }
.flag { display: flex; flex-direction: column; width: 7px; margin-right: 1px; }
.flag i { height: 2.500px; background: #2b5fb3; }
.flag i + i { background: #ffd400; }
.foot-link { text-decoration: underline; color: #f0f0f0; }
.foot-ext { width: 6px; height: 6px; margin: 0 2px 0 4px; }
.scale { position: absolute; right: 11px; top: 1px; width: 37px; display: flex; flex-direction: column; align-items: center; font: 5.500px/7px "Open Sans", sans-serif; color: #eee; }
.scale i { display: block; width: 37px; height: 2px; background: #9fa4a9; margin-top: 1px; }

/* second window */
.window-float { position: absolute; left: 262px; top: 365px; width: 636px; height: 337px; display: flex; flex-direction: column; background: #fff; box-shadow: 0 0 3px rgba(0,0,0,.6); border-right: 2px solid #3a3b3e; border-left: 1px solid #3a3b3e; }
.tabstrip-b { height: 23px; padding-left: 8px; }
.tabstrip-b .tab-first { margin-right: 13px; }
.tab-b { width: 131px; height: 19px; margin-left: 2px; }
.ncbi-fav { width: 8px; height: 8px; flex: none; }
.tab-b .tab-title { color: #d5d5d5; }
.toolbar-b { height: 20px; padding-left: 8px; }
.toolbar-b .address { margin-right: 11px; flex: 1; width: auto; min-width: 0; height: 16px; }
.toolbar-b .nav-icon { margin-right: 13px; }
.toolbar-b .copilot { margin-right: 6px; }
.page { flex: 1; display: flex; min-height: 0; background: #fff; padding-left: 1px; }
.page-main { flex: 1; min-width: 0; position: relative; font-family: "Roboto", sans-serif; color: #333; overflow: hidden; }
.vscroll { width: 8px; background: #f4f4f4; display: flex; flex-direction: column; align-items: center; padding-top: 5px; flex: none; }
.v-arrow { width: 0; height: 0; border: 2.500px solid transparent; border-bottom: 3px solid #888; border-top: 0; }
.v-thumb { width: 5px; height: 112px; margin-top: 3px; background: #8a8a8a; border-radius: 3px; }
.gov { height: 10px; display: flex; font: 5.400px/10px "Liberation Sans", sans-serif; color: #222; }
.gov-inner { width: 221px; background: #f0f0f0; display: flex; align-items: center; padding-left: 5px; white-space: nowrap; }
.us-flag { width: 7px; height: 5px; margin-right: 3px; background: repeating-linear-gradient(180deg, #c33 0 1px, #fff 1px 2px); box-shadow: inset 3px 2px 0 #335; }
.gov-how { margin-left: 17px; color: #33678a; border-bottom: 1px dotted #4fb04f; line-height: 8px; font-size: 5.700px; }
.nih { height: 33px; background: #20558a; display: flex; align-items: center; padding-left: 13px; color: #fff; }
.nih-logo { width: 33px; height: 22px; background: #fff; color: #20558a; font: 400 14px/22px "Liberation Sans", sans-serif; padding-left: 3px; clip-path: polygon(0 0, 78% 0, 100% 50%, 78% 100%, 0 100%); margin-right: 4px; letter-spacing: -.5px; }
.nih-name { font: 400 11.500px/13px "Liberation Sans", sans-serif; }
.nih-sub { font: italic 6.300px/9px "Liberation Sans", sans-serif; color: #d8e4ef; }
.sra-nav { height: 22px; width: 484px; background: #eee; display: flex; align-items: center; border-radius: 0 0 3px 0; border-bottom: 1px solid #e4e4e4; }
.sra-name { font: bold 12px "Roboto", sans-serif; color: #6a6a6a; width: 144px; flex: none; white-space: nowrap; border-right: 1px solid #e0e0e0; height: 100%; line-height: 21px; }
.sra-links { display: flex; gap: 16px; padding-left: 5px; font: 400 7px "Roboto", sans-serif; color: #222; white-space: nowrap; }
.crumbs { height: 14px; padding-left: 5px; display: flex; align-items: center; gap: 3px; font: 6.200px "Roboto", sans-serif; color: #333; border-bottom: 1px solid #e6e6e6; margin-top: 0; }
.crumbs a { color: #4b2a83; }
.crumb-sep { color: #888; }
.sra-title { margin: 16px 0 0 8px; font: bold 12.250px/18px "Lato", sans-serif; color: #14b1ae; white-space: nowrap; height: 18px; }
.sra-tabs { margin: 7px 0 0 7px; height: 21px; display: flex; border-bottom: 1px solid #ddd; font-size: 6.700px; color: #555; }
.stab { display: flex; align-items: center; padding: 0 10.500px; gap: 3px; white-space: nowrap; }
.stab svg { width: 7px; height: 7px; flex: none; }
.stab-on { width: 62px; border: 1px solid #ddd; border-bottom: 1px solid #fff; border-radius: 3px 3px 0 0; height: 21px; color: #222; padding: 0 8px; }
.sra-panel { position: relative; margin: 7px 0 0 15px; height: 137px; background: #fff; border-radius: 3px; box-shadow: 0 1px 3px rgba(0,0,0,.3); padding: 25px 0 0 7px; font-size: 7px; }
.ribbon { position: absolute; left: -7px; top: 6px; width: 35px; height: 12px; background: #f47a20; color: #fff; font: bold 6.500px/12px "Roboto", sans-serif; padding-left: 14px; border-radius: 0 2px 2px 0; }
.ribbon::after { content: ""; position: absolute; left: 0; top: 12px; border-top: 7px solid #b85f18; border-left: 7px solid transparent; }
.run-table { border-collapse: collapse; font-size: 7px; width: 281px; box-shadow: 0 1px 2px rgba(0,0,0,.15); }
.run-table th, .run-table td { border: 1px solid #e2e2e2; padding: 0 4.400px; text-align: left; height: 18px; white-space: nowrap; font-weight: 400; }
.run-table th { font-weight: bold; background: #f9fafb; height: 21px; color: #444; }
.quality { position: relative; height: 23px; width: 294px; border-bottom: 1px solid #ece4a8; display: flex; align-items: center; color: #444; }
.quality a { color: #4477bb; }
.q-bars { position: absolute; left: 207px; bottom: 0; display: flex; align-items: flex-end; }
.q-bars i { display: block; width: 11px; background: #eee08c; }
.q1 { height: 1px; width: 22px !important; margin-right: 11px; }
.q2 { height: 1.500px; }
.q3 { height: 4px; }
.q4 { height: 9px; }
.q5 { height: 12px; }
.reads-note { margin-top: 4px; color: #333; }
.reads { display: flex; width: 305px; height: 11px; margin-top: 8px; background: #99fb93; font-size: 6.500px; line-height: 11px; text-align: center; color: #333; }
.reads span { flex: 1; }
.reads span + span { border-left: 1px solid #d7fdd4; }
.legend-link { display: flex; align-items: center; gap: 2px; margin-top: 1px; height: 10px; width: 34px; border-bottom: 1px dotted #38b838; color: #3c70b5; font-size: 7px; }
.legend-link b { width: 7px; height: 7px; border-radius: 50%; background: #2a7fc9; color: #fff; font: bold 5.500px/7px "Roboto", sans-serif; text-align: center; }
.hscroll { position: absolute; left: 0; right: 0; bottom: 0; height: 4px; background: #f0f0f0; border-top: 1px solid #d0d0d0; }
```
